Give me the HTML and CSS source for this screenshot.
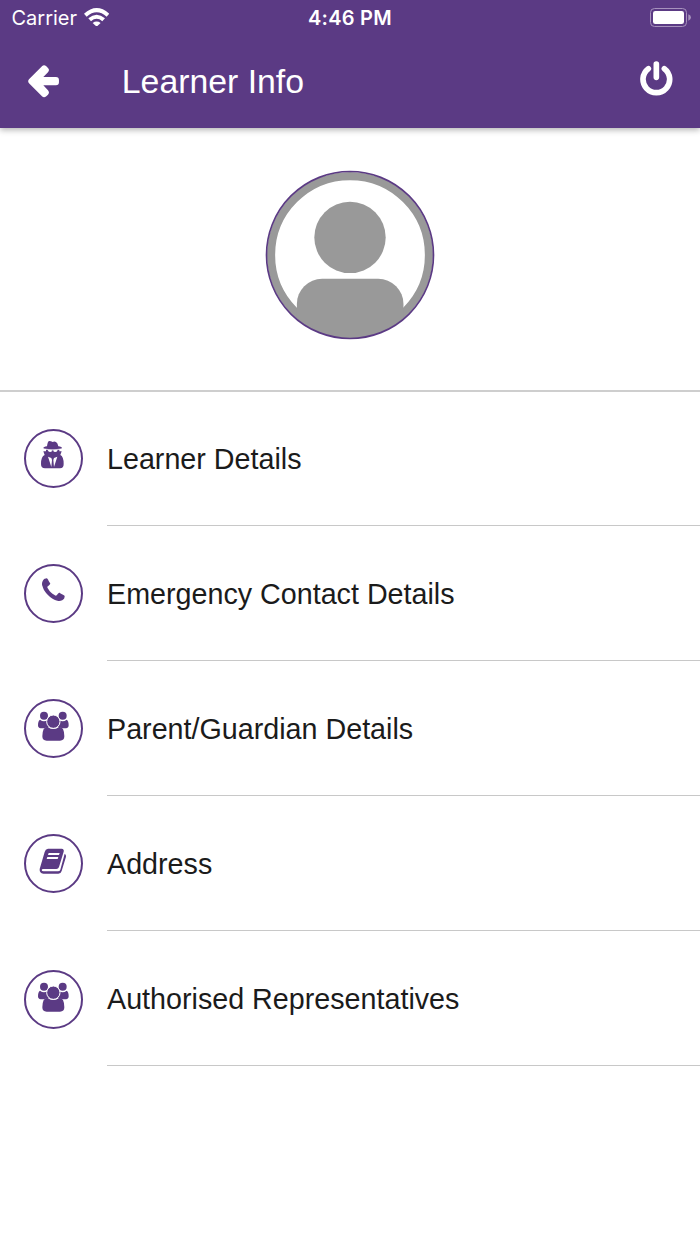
FILE: index.html
```html
<!DOCTYPE html>
<html lang="en">
<head>
  <meta charset="UTF-8">
  <meta name="viewport" content="width=device-width, initial-scale=1.0">
  <title>Learner Info</title>
  <link rel="stylesheet" href="styles.css">
</head>
<body>
  <svg class="sprite">
    <symbol id="users" viewBox="0 0 177 177">
      <circle cx="60" cy="50" r="12"/>
      <circle cx="116" cy="50" r="12"/>
      <path d="M48 62q6 5 12 5 6 0 10-3-2 11 4 20-8 1-13 4H50q-8-1-8-9 0-14 6-17z"/>
      <path d="M128 62q-6 5-12 5-6 0-10-3 2 11-4 20 8 1 13 4h11q8-1 8-9 0-14-6-17z"/>
      <path d="M70 83q8 7 18 7t18-7q15 1 15 29 0 13-13 13H68q-13 0-13-13 0-28 15-29z"/>
      <circle class="users__head" cx="88" cy="68" r="20"/>
    </symbol>
  </svg>
  <header class="header">
    <div class="status">
      <div class="status__left">
        <span class="status__carrier">Carrier</span>
        <svg class="status__wifi" viewBox="0 0 76 56">
          <path d="M0 17Q38-17 76 17l-8 9Q38 0 8 26z"/>
          <path d="M13 31q25-22 50 0l-8 9q-17-15-34 0z"/>
          <path d="M26 45q12-9 24 0L38 56z"/>
        </svg>
      </div>
      <span class="status__time">4:46 PM</span>
      <div class="status__right">
        <svg class="status__battery" viewBox="0 0 123 57">
          <rect class="battery__frame" x="1.5" y="1.5" width="108" height="54" rx="12"/>
          <rect x="9" y="9" width="93" height="39" rx="7"/>
          <path class="battery__tip" d="M115 19q8 3 8 9.500t-8 9.500z"/>
        </svg>
      </div>
    </div>
    <div class="toolbar">
      <svg class="toolbar__back" viewBox="0 0 94 98">
        <path d="M3 43L42 4q6-6 13 0l5 5q6 6 0 13L46 36h38q9 0 9 9v7q0 9-9 9H46l14 15q6 7 0 13l-5 5q-7 6-13 0L3 55q-5-6 0-12z"/>
      </svg>
      <h1 class="toolbar__title">Learner Info</h1>
      <svg class="toolbar__power" viewBox="0 0 98 105">
        <path d="M25 23a40 40 0 1 0 48 0M49 9v40"/>
      </svg>
    </div>
  </header>

  <section class="profile">
    <svg class="avatar" viewBox="0 0 506 506">
      <clipPath id="round"><circle cx="253" cy="253" r="250"/></clipPath>
      <g clip-path="url(#round)">
        <circle class="avatar__ring" cx="253" cy="253" r="239"/>
        <circle cx="253" cy="200" r="107.500"/>
        <rect x="93" y="324.500" width="321" height="260" rx="76"/>
      </g>
      <circle class="avatar__border" cx="253" cy="253" r="251.500"/>
    </svg>
  </section>

  <ul class="list">
    <li class="item">
      <div class="item__icon">
        <svg viewBox="0 0 177 177">
          <path d="M76 36q5 0 10 3 5-3 10 0 5 3 7 13 11 2 11 5t-28 4q-28-1-28-4t11-5q2-16 7-16z"/>
          <path d="M66 62h40v5h7l-4 11q10 4 10 27 0 13-11 13H63q-12 0-12-13 0-23 11-27l-4-11h8z"/>
          <path class="cut" d="M71 63h11l4 2 4-2h11q-1 6-7 6-5 0-6-3h-4q-1 3-6 3t-7-6zM72 83l10 4 2 6-2 21zM100 83l-10 4-2 6 2 21z"/>
        </svg>
      </div>
      <div class="item__label">Learner Details</div>
    </li>
    <li class="item">
      <div class="item__icon">
        <svg viewBox="0 0 177 177">
          <path transform="translate(54 43) scale(.0483)" d="M1408 1112q0 27-10 70.500t-21 68.500q-21 50-122 106-94 51-186 51-27 0-53-3.500t-57.500-12.500-47-14.500-55.500-20.500-49-18q-98-35-175-83-127-79-264-216t-216-264q-48-77-83-175-3-9-18-49t-20.500-55.500-14.500-47-12.500-57.500-3.500-53q0-92 51-186 56-101 106-122 25-11 68.500-21t70.500-10q14 0 21 3 18 6 53 76 11 19 30 54t35 63.500 31 53.500q3 4 17.500 25t21.500 35.500 7 28.500q0 20-28.500 50t-62 55-62 53-28.500 46q0 9 5 22.500t8.500 20.500 14 24 11.500 19q76 137 174 235t235 174q2 1 19 11.500t24 14 20.500 8.500 22.500 5q18 0 46-28.500t53-62 55-62 50-28.500q14 0 28.500 7t35.500 21.500 25 17.500q25 15 53.500 31t63.500 35 54 30q70 35 76 53 3 7 3 21z"/>
        </svg>
      </div>
      <div class="item__label">Emergency Contact Details</div>
    </li>
    <li class="item">
      <div class="item__icon"><svg><use href="#users"/></svg></div>
      <div class="item__label">Parent/Guardian Details</div>
    </li>
    <li class="item">
      <div class="item__icon">
        <svg viewBox="0 0 177 177">
          <path d="M72 44h41q8 1 6 9l-14 46q-2 6-8 6H58q-5 0-5 3 0 4 6 4h43q5 0 7-5l13-48q5 3 4 9l-13 43q-2 8-10 8H58q-12-1-11-14l15-51q2-9 10-10z"/>
          <path class="cut" d="M74 57h33l-2 6H72zM70 69h33l-2 6H68z"/>
        </svg>
      </div>
      <div class="item__label">Address</div>
    </li>
    <li class="item">
      <div class="item__icon"><svg><use href="#users"/></svg></div>
      <div class="item__label">Authorised Representatives</div>
    </li>
  </ul>
</body>
</html>
```
FILE: styles.css
```css
*{
  box-sizing: border-box;
}
body{
  margin: 0;
  background: #fff;
  color: #1b1b1b;
  font-family: "Liberation Sans", Arial, sans-serif;
}
.sprite{
  display: none;
}

.header{
  height: 128.4px;
  background: #5b3a84;
  color: #fff;
  fill: #fff;
  box-shadow: 0 2px 6px rgba(0,0,0,.3);
}
.status{
  display: grid;
  grid-template-columns: 1fr auto 1fr;
  align-items: center;
  height: 35px;
  padding: 0 9.5px;
  font-family: Inter, sans-serif;
  font-size: 20px;
}
.status__left{
  display: flex;
  align-items: center;
  gap: 7px;
  padding-left: 2px;
}
.status__wifi{
  width: 25.3px;
  height: 18.7px;
  margin-bottom: 1px;
}
.status__time{
  font-weight: 600;
  letter-spacing: .25px;
}
.status__right{
  display: flex;
  justify-content: flex-end;
}
.status__battery{
  width: 41px;
  height: 19px;
  margin-bottom: 1px;
}
.battery__frame{
  fill: none;
  stroke: #a792bd;
  stroke-width: 3;
}
.battery__tip{
  fill: #a792bd;
}

.toolbar{
  display: flex;
  align-items: center;
  height: 93px;
  padding: 0 27px 0 28px;
}
.toolbar__back{
  width: 31.3px;
  height: 32.7px;
}
.toolbar__title{
  flex: 1;
  margin: 0 0 0 62.5px;
  font-size: 33.8px;
  font-weight: 400;
}
.toolbar__power{
  width: 32.7px;
  height: 35px;
  margin-bottom: 6px;
  fill: none;
  stroke: #fff;
  stroke-width: 17;
  stroke-linecap: round;
}

.profile{
  display: flex;
  justify-content: center;
  height: 263.5px;
  padding-top: 42.6px;
  border-bottom: 2px solid #cecece;
}
.avatar{
  width: 168px;
  height: 168px;
  overflow: visible;
  fill: #999;
}
.avatar__ring{
  fill: #fff;
  stroke: #999;
  stroke-width: 27;
}
.avatar__border{
  fill: none;
  stroke: #5b3a84;
  stroke-width: 5;
}

.list{
  margin: -1.4px 0 0;
  padding: 0;
  list-style: none;
}
.item{
  display: flex;
  align-items: center;
  height: 135.2px;
  padding: .4px 0 0 24px;
}
.item__icon{
  position: relative;
  width: 59px;
  height: 59px;
  margin-right: 24px;
  fill: #5b3a84;
}
.item__icon::after{
  content: "";
  position: absolute;
  top: 0;
  right: 0;
  bottom: 0;
  left: 0;
  border: 2px solid #5b3a84;
  border-radius: 50%;
}
.item__icon svg{
  display: block;
  width: 100%;
  height: 100%;
}
.users__head{
  stroke: #fff;
  stroke-width: 3;
}
.cut{
  fill: #fff;
}
.item__label{
  display: flex;
  flex: 1;
  align-items: center;
  height: 100%;
  padding-top: 2.6px;
  border-bottom: 1px solid #c8c8c8;
  font-size: 28.7px;
}
```
